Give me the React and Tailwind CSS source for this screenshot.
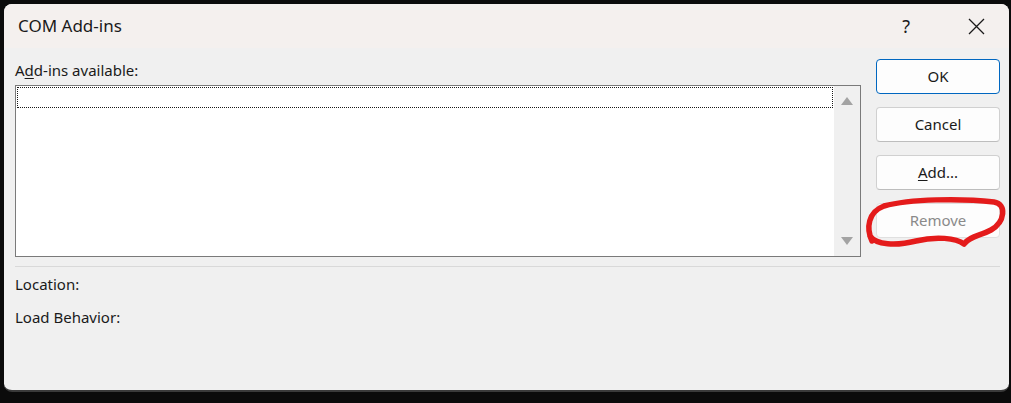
import React from "react";

const font = { fontFamily: '"Noto Sans", "Open Sans", sans-serif' };

const DialogButton = ({ children, primary, disabled }) => (
  <button
    className={`flex h-[35px] w-[124px] items-center justify-center rounded-[4px] border bg-[#fdfdfd] text-[15px] ${
      primary
        ? "border-[#0067c0] text-[#1a1a1a]"
        : disabled
        ? "border-[#e0e0e0] text-[#8a8a8a]"
        : "border-[#d0d0d0] border-b-[#bdbdbd] text-[#1a1a1a]"
    }`}
  >
    {children}
  </button>
);

const App = () => {
  return (
    <div
      className="relative h-[403px] w-[1011px] overflow-hidden bg-[#0b0b0b] pl-[4px] pt-[4px]"
      style={font}
    >
      <div className="flex h-[388px] w-[1005px] flex-col overflow-hidden rounded-[8px] border-b-[2px] border-[#3a3a3a] bg-[#f0f0f0]">
        {/* title bar */}
        <div className="flex h-[44px] items-center bg-[#f4f0ee] pl-[14px]">
          <span className="flex-1 text-[17px] text-[#1a1a1a]">COM Add-ins</span>
          <span className="mr-[58px] text-[18px] text-[#1a1a1a]">?</span>
          <div className="mr-[24px] flex h-[17px] w-[17px] items-center justify-center">
            <svg width="17" height="17" viewBox="0 0 17 17">
              <path d="M1 1 L16 16 M16 1 L1 16" stroke="#1a1a1a" strokeWidth="1.3" fill="none" />
            </svg>
          </div>
        </div>

        {/* body */}
        <div className="flex flex-1 flex-col pl-[11px] pr-[9px] pt-[11px]">
          <div className="flex items-start gap-[15px]">
            <div className="flex w-[846px] flex-col">
              <div className="mt-[1px] h-[20px] text-[15px] leading-[20px] text-[#1a1a1a]">
                A<span className="underline underline-offset-2">d</span>d-ins available:
              </div>
              <div className="mt-[5px] flex h-[172px] border border-[#7a7a7a] bg-white">
                <div className="flex-1 p-[1px]">
                  <div className="h-[21px] border border-dotted border-[#1a1a1a]" />
                </div>
                <div className="flex w-[26px] flex-col items-center justify-between bg-[#f0f0f0] py-[11px]">
                  <svg width="12" height="8" viewBox="0 0 12 8">
                    <path d="M6 0 L12 8 L0 8 Z" fill="#a3a3a3" />
                  </svg>
                  <svg width="12" height="8" viewBox="0 0 12 8">
                    <path d="M0 0 L12 0 L6 8 Z" fill="#a3a3a3" />
                  </svg>
                </div>
              </div>
            </div>
            <div className="flex flex-col gap-[13px]">
              <DialogButton primary>OK</DialogButton>
              <DialogButton>Cancel</DialogButton>
              <DialogButton>
                <span>
                  <span className="underline underline-offset-2">A</span>dd...
                </span>
              </DialogButton>
              <DialogButton disabled>Remove</DialogButton>
            </div>
          </div>
          <div className="mt-[9px] h-px bg-[#d9d9d9]" />
          <div className="mt-[7px] h-[20px] text-[15px] leading-[20px] text-[#1a1a1a]">Location:</div>
          <div className="mt-[13px] h-[20px] text-[15px] leading-[20px] text-[#1a1a1a]">Load Behavior:</div>
        </div>
      </div>

      {/* red annotation */}
      <svg className="pointer-events-none absolute inset-0" width="1011" height="403" viewBox="0 0 1011 403">
        <path
          d="M872 241 C866 228 868 212 884 206 C910 199 960 198 994 202 C1007 204 1005 222 991 230 C980 236 970 236 964 244 C956 238 936 236 916 241 C896 246 876 245 870 236"
          stroke="#e41b1b"
          strokeWidth="5.5"
          strokeLinecap="round"
          strokeLinejoin="round"
          fill="none"
        />
      </svg>
    </div>
  );
};

export default App;
